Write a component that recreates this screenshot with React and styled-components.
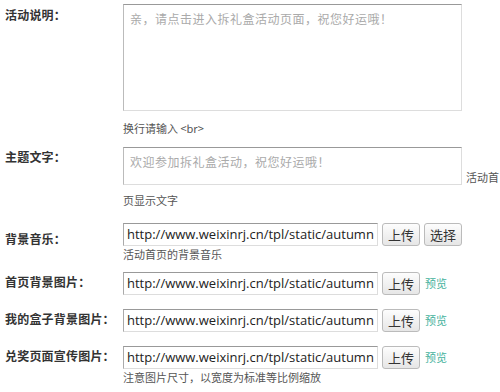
import React from "react";
import styled, { createGlobalStyle } from "styled-components";

const cjk = `"Noto Sans CJK SC", "Microsoft YaHei", sans-serif`;
const latin = `"Open Sans", "Noto Sans CJK SC", sans-serif`;

const GlobalStyle = createGlobalStyle`
  html, body {
    margin: 0;
    padding: 0;
    background: #fff;
  }
  body {
    width: 500px;
    height: 392px;
    overflow: hidden;
    font-family: ${cjk};
  }
`;

const Form = styled.div`
  padding-top: 4px;
  display: flex;
  flex-direction: column;
`;

const Row = styled.div`
  display: grid;
  grid-template-columns: 123px 1fr;
  margin-top: ${(p) => p.gap || 0}px;
`;

const Label = styled.div`
  padding-left: 5px;
  padding-top: ${(p) => p.offset || 0}px;
  font-size: 12px;
  line-height: 20px;
  font-weight: 700;
  color: #333;
  letter-spacing: 0.2px;
`;

const Field = styled.div`
  display: flex;
  flex-direction: column;
`;

const Line = styled.div`
  display: flex;
  align-items: ${(p) => p.align || "center"};
`;

const Area = styled.textarea`
  box-sizing: border-box;
  width: 339px;
  height: ${(p) => p.h}px;
  margin: 0;
  padding: 5px 6px;
  resize: none;
  border: 1px solid #ddd;
  border-top-color: #999;
  border-left-color: #bbb;
  font-family: ${cjk};
  font-size: 12px;
  letter-spacing: 0.5px;
  line-height: 18px;
  color: #333;
  background: #fff;
  outline: none;
  &::placeholder {
    color: #aaa;
  }
`;

const Input = styled.input`
  box-sizing: border-box;
  width: 255px;
  height: 23px;
  margin: 0;
  padding: 0 3px;
  border: 1px solid #ddd;
  border-top-color: #999;
  border-left-color: #aaa;
  font-family: ${latin};
  font-size: 13px;
  color: #222;
  background: #fff;
  outline: none;
`;

const Button = styled.button`
  box-sizing: border-box;
  width: 38px;
  height: 23px;
  margin: 1px 0 0 4px;
  padding: 0;
  border: 1px solid #bbb;
  border-radius: 3px;
  background: linear-gradient(#fdfdfd, #e6e6e6);
  font-family: ${cjk};
  font-size: 13px;
  color: #333;
  cursor: pointer;
`;

const Preview = styled.a`
  margin-left: 5px;
  font-size: 11px;
  color: #45b29d;
  text-decoration: none;
`;

const Hint = styled.span`
  font-size: 11px;
  line-height: 16px;
  color: #555;
  margin-top: ${(p) => p.gap || 0}px;
  margin-left: ${(p) => p.left || 0}px;
`;

const URL = "http://www.weixinrj.cn/tpl/static/autumns/img/bg.jpg";

const ImageRow = ({ label, gap, note }) => (
  <Row gap={gap}>
    <Label offset={1}>{label}</Label>
    <Field>
      <Line>
        <Input readOnly defaultValue={URL} />
        <Button>上传</Button>
        <Preview href="#">预览</Preview>
      </Line>
      {note && <Hint gap={0}>{note}</Hint>}
    </Field>
  </Row>
);

export default function App() {
  return (
    <>
      <GlobalStyle />
      <Form>
        <Row>
          <Label offset={1}>活动说明：</Label>
          <Field>
            <Area h={107} placeholder="亲，请点击进入拆礼盒活动页面，祝您好运哦！" />
            <Hint gap={9}>换行请输入 &lt;br&gt;</Hint>
          </Field>
        </Row>

        <Row gap={11}>
          <Label offset={0}>主题文字：</Label>
          <Field>
            <Line align="flex-end">
              <Area h={38} placeholder="欢迎参加拆礼盒活动，祝您好运哦！" />
              <Hint left={4} gap={0}>活动首</Hint>
            </Line>
            <Hint gap={7}>页显示文字</Hint>
          </Field>
        </Row>

        <Row gap={14}>
          <Label offset={7}>背景音乐：</Label>
          <Field>
            <Line>
              <Input readOnly defaultValue="http://www.weixinrj.cn/tpl/static/autumns/music/bg.mp3" />
              <Button>上传</Button>
              <Button>选择</Button>
            </Line>
            <Hint gap={0}>活动首页的背景音乐</Hint>
          </Field>
        </Row>

        <ImageRow label="首页背景图片：" gap={9} />
        <ImageRow label="我的盒子背景图片：" gap={13} />
        <ImageRow
          label="兑奖页面宣传图片："
          gap={13}
          note="注意图片尺寸，以宽度为标准等比例缩放"
        />
      </Form>
    </>
  );
}
